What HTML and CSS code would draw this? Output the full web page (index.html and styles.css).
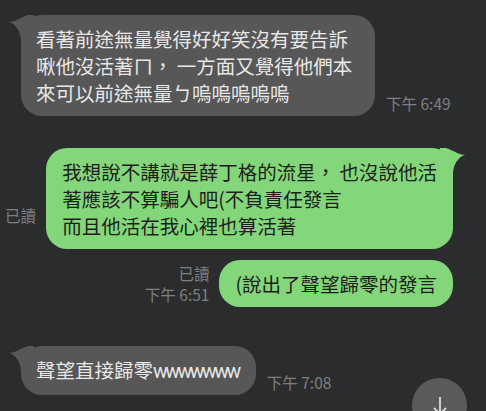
FILE: index.html
```html
<!DOCTYPE html>
<html lang="zh-Hant">
  <head>
    <meta charset="UTF-8" />
    <meta name="viewport" content="width=device-width, initial-scale=1.0" />
    <title>聊天</title>
    <link rel="stylesheet" href="styles.css">
  </head>
  <body>
    <div class="screen">
    <div class="chat">

      <div class="row in">
        <div class="bubble gray">
          <svg class="tail" viewBox="0 0 26 26"><path d="M0.5 6.5 C6 8 11 3 20 0 H26 V26 H13 C13 17 8 9 0.5 6.5 Z"/></svg>
          看著前途無量覺得好好笑沒有要告訴啾他沒活著ㄇ， 一方面又覺得他們本來可以前途無量ㄅ嗚嗚嗚嗚嗚
        </div>
        <div class="meta"><span class="time">下午 6:49</span></div>
      </div>

      <div class="row out gap-big">
        <div class="meta"><span>已讀</span><span class="time empty"></span></div>
        <div class="bubble green">
          <svg class="tail" viewBox="0 0 26 26"><path d="M0.5 6.5 C6 8 11 3 20 0 H26 V26 H13 C13 17 8 9 0.5 6.5 Z"/></svg>
          我想說不講就是薛丁格的流星， 也沒說他活<br>著應該不算騙人吧(不負責任發言<br>而且他活在我心裡也算活著
        </div>
      </div>

      <div class="row out gap-small">
        <div class="meta"><span>已讀</span><span class="time">下午 6:51</span></div>
        <div class="bubble green">(說出了聲望歸零的發言</div>
      </div>

      <div class="row in gap-big2">
        <div class="bubble gray">
          <svg class="tail" viewBox="0 0 26 26"><path d="M0.5 6.5 C6 8 11 3 20 0 H26 V26 H13 C13 17 8 9 0.5 6.5 Z"/></svg>
          聲望直接歸零<span class="latin">wwwwwww</span>
        </div>
        <div class="meta"><span class="time">下午 7:08</span></div>
      </div>

    </div>

    <button class="scroll-down">
      <svg viewBox="0 0 20 20" width="20" height="20"><path d="M10 1 V18 M4 12 L10 18 L16 12"/></svg>
    </button>
    </div>
  </body>
</html>
```

FILE: styles.css
```css
html, body {
  margin: 0;
  overflow: hidden;
}

body {
  background-color: #2b2c2e;
  font-family: "Noto Sans CJK TC", "Noto Sans", sans-serif;
}

.screen {
  position: relative;
  height: 411px;
  overflow: hidden;
}

.chat {
  display: flex;
  flex-direction: column;
  padding-top: 15px;
}

.row {
  display: flex;
  align-items: flex-end;
}

.row.in {
  padding-left: 21px;
  gap: 11px;
}

.row.out {
  justify-content: flex-end;
  padding-right: 33px;
  gap: 10px;
}

.gap-big { margin-top: 32px; }
.gap-small { margin-top: 11px; }
.gap-big2 { margin-top: 39px; }

.bubble {
  position: relative;
  box-sizing: border-box;
  font-size: 19.5px;
  line-height: 27px;
  border-radius: 21px;
}

.bubble.gray {
  max-width: 354px;
  padding: 10px 17px 10px 15px;
  background-color: #575757;
  color: #e8e8e8;
}

.bubble.green {
  padding: 10px 16px;
  background-color: #83d679;
  color: #1e1e1e;
}

.latin {
  font-family: Roboto, "Noto Sans", sans-serif;
  letter-spacing: -2.4px;
}

.tail {
  position: absolute;
  top: 0;
  width: 26px;
  height: 26px;
}

.gray .tail {
  left: -13px;
  fill: #575757;
}

.green .tail {
  right: -13px;
  fill: #83d679;
  transform: scaleX(-1);
}

.meta {
  display: flex;
  flex-direction: column;
  align-items: flex-end;
  padding-bottom: 2px;
  font-size: 15.5px;
  line-height: 21px;
  color: #7f7f7f;
  white-space: nowrap;
}

.time.empty {
  height: 21px;
}

.scroll-down {
  position: absolute;
  left: 412px;
  top: 378px;
  width: 55px;
  height: 55px;
  border: none;
  border-radius: 50%;
  background-color: #5b5b5b;
  display: flex;
  align-items: center;
  justify-content: center;
  padding: 0;
}

.scroll-down svg {
  fill: none;
  stroke: #dcdcdc;
  stroke-width: 1.8;
}
```
